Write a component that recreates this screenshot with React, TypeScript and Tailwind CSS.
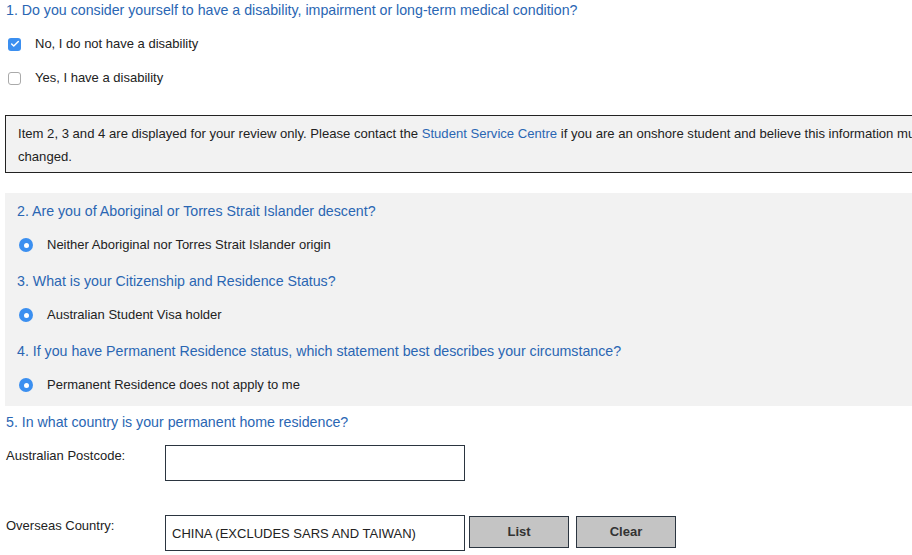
import { Check } from 'lucide-react';

const font = { fontFamily: '"Liberation Sans", Arial, sans-serif' };

function Question({ children, className = '' }: { children: React.ReactNode; className?: string }) {
  return <p className={`text-[14.2px] leading-[20px] text-[#2a66b3] ${className}`}>{children}</p>;
}

function Radio({ label }: { label: string }) {
  return (
    <div className="flex items-center h-[20px]">
      <span className="ml-[2px] w-[14px] h-[14px] rounded-full bg-[#3b8ff0] flex items-center justify-center">
        <span className="w-[5px] h-[5px] rounded-full bg-white" />
      </span>
      <span className="ml-[14px] text-[13px] text-[#222]">{label}</span>
    </div>
  );
}

export default function App() {
  return (
    <div className="w-[912px] h-[555px] overflow-hidden bg-white" style={font}>
      <div className="w-[1000px]">
        <Question className="pl-[6px]">
          1. Do you consider yourself to have a disability, impairment or long-term medical condition?
        </Question>

        <div className="pl-[8px] mt-[14px] flex items-center h-[20px]">
          <span className="w-[13px] h-[13px] rounded-[3px] bg-[#3b8ff0] flex items-center justify-center">
            <Check size={10} strokeWidth={3.5} color="#fff" />
          </span>
          <span className="ml-[14px] text-[13px] text-[#222]">No, I do not have a disability</span>
        </div>
        <div className="pl-[8px] mt-[14px] flex items-center h-[20px]">
          <span className="w-[13px] h-[13px] rounded-[3px] border border-[#aaa] bg-white" />
          <span className="ml-[14px] text-[13px] text-[#222]">Yes, I have a disability</span>
        </div>

        <div className="ml-[5px] mt-[27px] border border-[#222] bg-[#f2f2f2] pl-[12px] pt-[6px] pb-[4px] text-[13.1px] leading-[23px] text-[#222] w-[990px]">
          Item 2, 3 and 4 are displayed for your review only. Please contact the{' '}
          <span className="text-[#2a66b3]">Student Service Centre</span> if you are an onshore student and believe this
          information must be
          <br />
          changed.
        </div>

        <div className="ml-[5px] mt-[20px] bg-[#f2f2f2] pl-[12px] pt-[8px] h-[213px]">
          <Question>2. Are you of Aboriginal or Torres Strait Islander descent?</Question>
          <div className="mt-[14px]">
            <Radio label="Neither Aboriginal nor Torres Strait Islander origin" />
          </div>
          <Question className="mt-[16px]">3. What is your Citizenship and Residence Status?</Question>
          <div className="mt-[14px]">
            <Radio label="Australian Student Visa holder" />
          </div>
          <Question className="mt-[16px]">
            4. If you have Permanent Residence status, which statement best describes your circumstance?
          </Question>
          <div className="mt-[14px]">
            <Radio label="Permanent Residence does not apply to me" />
          </div>
        </div>

        <Question className="pl-[6px] mt-[6px]">5. In what country is your permanent home residence?</Question>

        <div className="flex mt-[13px] pl-[6px]">
          <label className="w-[159px] text-[13px] text-[#222] pt-[1px]">Australian Postcode:</label>
          <input className="w-[300px] h-[36px] border border-[#2b3540] bg-white outline-none px-[6px] text-[13px]" />
        </div>

        <div className="flex mt-[34px] pl-[6px] items-start">
          <label className="w-[159px] text-[13px] text-[#222] pt-[1px]">Overseas Country:</label>
          <input
            readOnly
            value="CHINA (EXCLUDES SARS AND TAIWAN)"
            className="w-[300px] h-[36px] border border-[#2b3540] bg-white outline-none px-[6px] text-[13px] text-[#222]"
          />
          <button className="ml-[4px] mt-[1px] w-[100px] h-[32px] border border-[#2b3540] bg-[#c4c4c4] text-[13px] font-bold text-[#333]">
            List
          </button>
          <button className="ml-[7px] mt-[1px] w-[100px] h-[32px] border border-[#2b3540] bg-[#c4c4c4] text-[13px] font-bold text-[#333]">
            Clear
          </button>
        </div>
      </div>
    </div>
  );
}
